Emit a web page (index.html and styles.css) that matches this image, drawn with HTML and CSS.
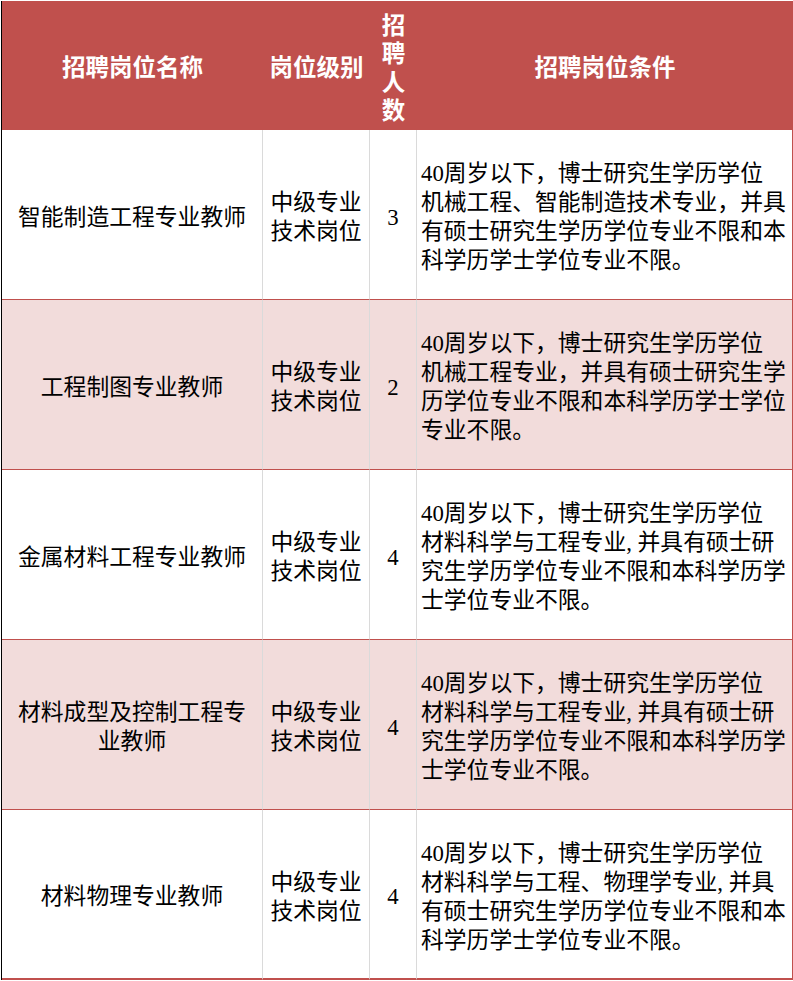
FILE: index.html
```html
<!DOCTYPE html>
<html lang="zh-CN">
<head>
<meta charset="utf-8">
<title>招聘岗位</title>
<link rel="stylesheet" href="styles.css">
</head>
<body>
<div class="table">
  <div class="hd">招聘岗位名称</div>
  <div class="hd">岗位级别</div>
  <div class="hd hd-narrow">招<br>聘<br>人<br>数</div>
  <div class="hd">招聘岗位条件</div>

  <div class="cell name">智能制造工程专业教师</div>
  <div class="cell level">中级专业<br>技术岗位</div>
  <div class="cell num">3</div>
  <div class="cell cond">40周岁以下，博士研究生学历学位<br>机械工程、智能制造技术专业，并具<br>有硕士研究生学历学位专业不限和本<br>科学历学士学位专业不限。</div>

  <div class="cell name alt">工程制图专业教师</div>
  <div class="cell level alt">中级专业<br>技术岗位</div>
  <div class="cell num alt">2</div>
  <div class="cell cond alt">40周岁以下，博士研究生学历学位<br>机械工程专业，并具有硕士研究生学<br>历学位专业不限和本科学历学士学位<br>专业不限。</div>

  <div class="cell name">金属材料工程专业教师</div>
  <div class="cell level">中级专业<br>技术岗位</div>
  <div class="cell num">4</div>
  <div class="cell cond">40周岁以下，博士研究生学历学位<br>材料科学与工程专业, 并具有硕士研<br>究生学历学位专业不限和本科学历学<br>士学位专业不限。</div>

  <div class="cell name alt">材料成型及控制工程专<br>业教师</div>
  <div class="cell level alt">中级专业<br>技术岗位</div>
  <div class="cell num alt">4</div>
  <div class="cell cond alt">40周岁以下，博士研究生学历学位<br>材料科学与工程专业, 并具有硕士研<br>究生学历学位专业不限和本科学历学<br>士学位专业不限。</div>

  <div class="cell name last">材料物理专业教师</div>
  <div class="cell level last">中级专业<br>技术岗位</div>
  <div class="cell num last">4</div>
  <div class="cell cond last">40周岁以下，博士研究生学历学位<br>材料科学与工程、物理学专业, 并具<br>有硕士研究生学历学位专业不限和本<br>科学历学士学位专业不限。</div>
</div>
</body>
</html>
```

FILE: styles.css
```css
html, body {
  margin: 0;
  padding: 0;
  background: #ffffff;
}

.table {
  margin: 1px 0 0 1px;
  width: 792px;
  display: grid;
  grid-template-columns: 261px 107px 47px 376px;
  grid-template-rows: 129px repeat(5, 170px);
  border-left: 1px solid #000000;
  box-sizing: border-box;
  font-family: "Liberation Serif", "Noto Sans CJK SC", serif;
  color: #000000;
}

.hd {
  box-sizing: border-box;
  background: #C0504D;
  color: #ffffff;
  font-family: "Liberation Serif", "Noto Sans CJK SC", serif;
  font-weight: 700;
  font-size: 23.5px;
  line-height: 27px;
  padding-top: 5px;
  display: flex;
  align-items: center;
  justify-content: center;
  text-align: center;
}

.hd-narrow {
  line-height: 28.5px;
  padding-top: 6px;
}

.cell {
  box-sizing: border-box;
  display: flex;
  align-items: center;
  justify-content: center;
  text-align: center;
  font-size: 22.8px;
  line-height: 29px;
  padding-top: 5px;
  border-bottom: 1px solid #C0504D;
  border-right: 1px solid #dadada;
  white-space: nowrap;
}

.cell.alt {
  background: #F2DCDB;
}

.cell.last {
  border-bottom: 2px solid #C0504D;
}

.name {
  padding-left: 6px;
  padding-right: 6px;
}

.cond {
  justify-content: flex-start;
  text-align: left;
  padding-left: 4px;
  border-right: 1px solid #C0504D;
}
```
